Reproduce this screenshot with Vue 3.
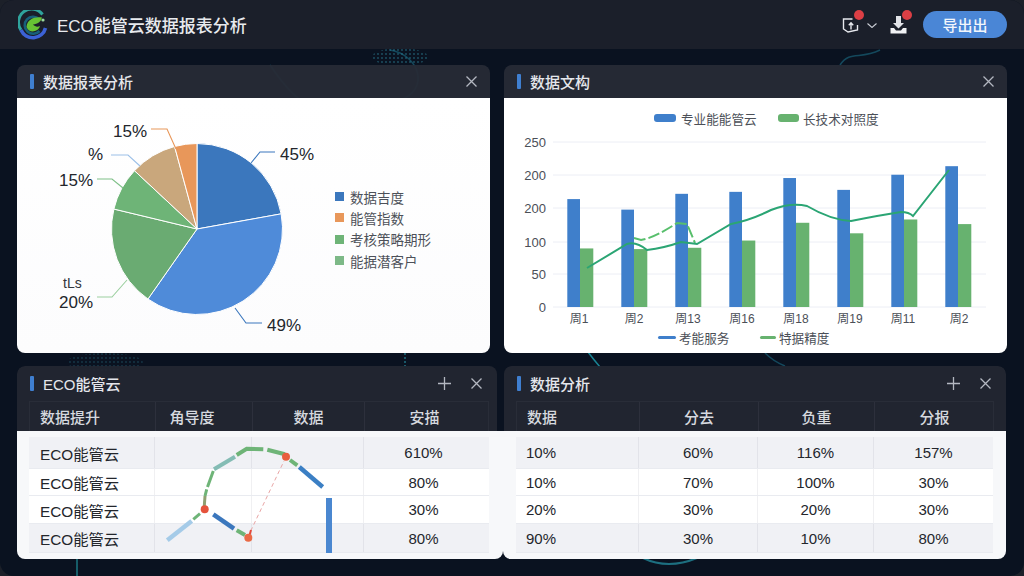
<script setup>
const pieCx = 180
const pieCy = 131
const pieR = 85.5

const slices = [
  { from: 0, to: 79.8, color: '#3b77bd' },
  { from: 79.8, to: 215, color: '#4f8bd9' },
  { from: 215, to: 283.5, color: '#6aab72' },
  { from: 283.5, to: 313, color: '#6eb477' },
  { from: 313, to: 344.8, color: '#c9a77c' },
  { from: 344.8, to: 360, color: '#e8975a' },
]

function polar(deg) {
  const rad = (deg * Math.PI) / 180
  return [pieCx + pieR * Math.sin(rad), pieCy - pieR * Math.cos(rad)]
}

function slicePath(s) {
  const [x1, y1] = polar(s.from)
  const [x2, y2] = polar(s.to)
  const large = s.to - s.from > 180 ? 1 : 0
  return `M${pieCx} ${pieCy}L${x1} ${y1}A${pieR} ${pieR} 0 ${large} 1 ${x2} ${y2}Z`
}

const pieLabels = [
  { text: '45%', x: 263, y: 62, line: '234,65 243,54 258,54', color: '#3b77bd' },
  { text: '49%', x: 250, y: 233, line: '218,210 229,225 245,225', color: '#3b77bd' },
  { text: '15%', x: 96, y: 39, line: '159,51 150,31 134,31', color: '#e8975a' },
  { text: '%', x: 71, y: 62, line: '123,68 111,57 94,57', color: '#9cc0e8' },
  { text: '15%', x: 42, y: 88, line: '106,90 95,81 80,81', color: '#7fc088' },
  { text: '20%', x: 42, y: 210, line: '110,182 95,199 80,199', color: '#9bcf9f' },
]

const pieLegend = [
  { name: '数据吉度', color: '#3b77bd' },
  { name: '能管指数', color: '#e8975a' },
  { name: '考核策略期形', color: '#6eb477' },
  { name: '能据潜客户', color: '#7db987' },
]

const yTicks = [
  { label: '250', y: 44 },
  { label: '200', y: 77 },
  { label: '200', y: 110 },
  { label: '100', y: 144 },
  { label: '50', y: 176 },
  { label: '0', y: 209 },
]

const weeks = [
  { label: '周1', x: 75, blue: 164, green: 89 },
  { label: '周2', x: 130, blue: 148, green: 88 },
  { label: '周13', x: 184, blue: 172, green: 90 },
  { label: '周16', x: 238, blue: 175, green: 101 },
  { label: '周18', x: 292, blue: 196, green: 128 },
  { label: '周19', x: 346, blue: 178, green: 112 },
  { label: '周11', x: 399, blue: 201, green: 133 },
  { label: '周2', x: 455, blue: 214, green: 126 },
]

const barBase = 209
const barScale = 0.658
const barX = (i) => 63.3 + i * 54

const leftRows = ['610%', '80%', '30%', '80%']

const rightRows = [
  ['10%', '60%', '116%', '157%'],
  ['10%', '70%', '100%', '30%'],
  ['20%', '30%', '20%', '30%'],
  ['90%', '30%', '10%', '80%'],
]
</script>

<template>
  <div class="screen">
    <svg class="backdrop" width="1024" height="576" viewBox="0 0 1024 576" fill="none">
      <defs>
        <pattern id="dots" width="4" height="4" patternUnits="userSpaceOnUse">
          <circle cx="2" cy="2" r="0.9" fill="#2a7f95" />
        </pattern>
      </defs>
      <g stroke="#17566b" stroke-width="1.5" opacity="0.8">
        <path d="M270 65C300 110 330 130 400 100C430 90 420 55 390 50" />
        <path d="M880 50C860 60 850 50 840 65" />
        <path d="M765 353C770 358 775 362 785 366" />
      </g>
      <path d="M588 352Q594 360 600 367" stroke="#1a8494" stroke-width="1.5" />
      <path d="M643 558Q668 570 697 558" stroke="#1d6f80" stroke-width="2" />
      <path d="M77 559V576" stroke="#1f8f9a" stroke-width="1.2" />
      <path d="M405 353V366" stroke="#1f6f80" stroke-width="1.5" stroke-dasharray="2 2" />
      <ellipse cx="400" cy="57" rx="28" ry="9" fill="url(#dots)" opacity="0.6" />
      <ellipse cx="105" cy="362" rx="38" ry="9" fill="url(#dots)" opacity="0.35" />
    </svg>

    <header class="topbar">
      <div class="brand">
        <svg class="logo" width="30" height="30" viewBox="0 0 30 30" fill="none">
          <path d="M24.5 4.5A13 13 0 0 0 3 20" stroke="#2fa39c" stroke-width="3" />
          <path d="M3 20A13 13 0 0 0 27.5 18" stroke="#3c62d6" stroke-width="3.6" />
          <path d="M21 9A8.5 8.5 0 1 0 21.5 21" stroke="#17607a" stroke-width="2.6" />
          <path d="M8.5 17C9 9.5 16 6.5 24 7.5C23 12 19.5 14 15 14.5C17 16.5 19 17.5 22 16C20.5 22 11 24 8.5 17Z" fill="#67c234" />
          <circle cx="25" cy="10" r="1.6" fill="#9bd8a0" />
        </svg>
        <h1 class="app-title">ECO能管云数据报表分析</h1>
      </div>
      <div class="actions">
        <span class="icon-wrap icon-wrap--first">
          <svg width="17" height="17" viewBox="0 0 17 17" fill="none" stroke="#e7e9ee" stroke-width="1.4">
            <path d="M10.5 3H1.5V13L6 16L15.5 14V9" />
            <path d="M9 13.5V7M6.8 9.2L9 6.8L11.2 9.2" />
          </svg>
          <i class="badge"></i>
        </span>
        <svg class="chevron" width="10" height="5" viewBox="0 0 10 5" fill="none" stroke="#c9ccd4" stroke-width="1.1">
          <path d="M0.5 0.5L5 4.5L9.5 0.5" />
        </svg>
        <span class="icon-wrap icon-wrap--second">
          <svg width="17" height="18" viewBox="0 0 17 18">
            <path d="M6 0H11V7H14L8.5 12.5L3 7H6Z" fill="#e2e4e8" />
            <path d="M0.5 12H4L6 14.5H11L13 12H16.5V17.5H0.5Z" fill="#f1f2f4" />
          </svg>
          <i class="badge"></i>
        </span>
        <button class="export-btn">导出出</button>
      </div>
    </header>

    <main class="content">
      <div class="row row--top">
        <section class="panel panel--pie">
          <div class="panel-head">
            <span class="panel-mark"></span>
            <span class="panel-title">数据报表分析</span>
            <svg class="head-icon" width="11" height="11" viewBox="0 0 11 11"><path d="M0.5 0.5L10.5 10.5M10.5 0.5L0.5 10.5" /></svg>
          </div>
          <div class="panel-body pie-body">
            <svg class="pie" width="310" height="255" viewBox="0 0 310 255">
              <path
                v-for="s in slices"
                :key="s.from"
                :d="slicePath(s)"
                :fill="s.color"
                stroke="#fff"
                stroke-width="1"
              />
              <g v-for="l in pieLabels" :key="l.line">
                <polyline :points="l.line" fill="none" :stroke="l.color" stroke-width="1.1" />
                <text :x="l.x" :y="l.y" class="pie-label">{{ l.text }}</text>
              </g>
              <text x="46" y="190" class="pie-note">tLs</text>
            </svg>
            <ul class="pie-legend">
              <li v-for="item in pieLegend" :key="item.name">
                <i :style="{ background: item.color }"></i>{{ item.name }}
              </li>
            </ul>
          </div>
        </section>

        <section class="panel panel--bars">
          <div class="panel-head">
            <span class="panel-mark"></span>
            <span class="panel-title">数据文构</span>
            <svg class="head-icon" width="11" height="11" viewBox="0 0 11 11"><path d="M0.5 0.5L10.5 10.5M10.5 0.5L0.5 10.5" /></svg>
          </div>
          <div class="panel-body">
            <svg class="bars" width="502" height="255" viewBox="0 0 502 255">
              <rect x="150" y="16" width="22" height="8" rx="3" fill="#3f7fcb" />
              <text x="177" y="26" class="legend-text">专业能能管云</text>
              <rect x="274" y="16" width="21" height="8" rx="3" fill="#67b26f" />
              <text x="299" y="26" class="legend-text">长技术对照度</text>

              <g v-for="t in yTicks" :key="t.y">
                <line x1="49" x2="482" :y1="t.y" :y2="t.y" stroke="#eceef5" />
                <text x="42" :y="t.y + 5" text-anchor="end" class="axis-text">{{ t.label }}</text>
              </g>

              <g v-for="(w, i) in weeks" :key="i">
                <rect :x="barX(i)" :y="barBase - w.blue * barScale" width="12.7" :height="w.blue * barScale" fill="#3f7fcb" />
                <rect :x="barX(i) + 12.7" :y="barBase - w.green * barScale" width="13.3" :height="w.green * barScale" fill="#67b26f" />
                <text :x="w.x" y="225" text-anchor="middle" class="week-text">{{ w.label }}</text>
              </g>

              <path
                d="M130 140L137 142Q150 140 173 125L183 126L191 145"
                fill="none"
                stroke="#58bf6c"
                stroke-width="2"
                stroke-dasharray="12 3"
              />
              <path
                d="M83 170L123 146Q132 143 143 152Q160 150 177 144L193 146L227 126Q247 122 267 112Q287 104 303 108Q327 122 347 123Q377 117 397 114Q405 114 409 118L445 72"
                fill="none"
                stroke="#2ba574"
                stroke-width="2"
              />

              <rect x="154" y="238" width="18" height="3" rx="1.5" fill="#3f7fcb" />
              <text x="175" y="245" class="legend-text">考能服务</text>
              <rect x="256" y="238" width="16" height="3" rx="1.5" fill="#67b26f" />
              <text x="275" y="245" class="legend-text">特据精度</text>
            </svg>
          </div>
        </section>
      </div>

      <div class="row row--bottom">
        <section class="panel panel--table-left">
          <div class="table-top">
            <div class="panel-head panel-head--tall">
              <span class="panel-mark"></span>
              <span class="panel-title">ECO能管云</span>
              <svg class="head-icon head-icon--plus" width="13" height="13" viewBox="0 0 13 13"><path d="M6.5 0V13M0 6.5H13" /></svg>
              <svg class="head-icon" width="11" height="11" viewBox="0 0 11 11"><path d="M0.5 0.5L10.5 10.5M10.5 0.5L0.5 10.5" /></svg>
            </div>
            <div class="tbl-head cols-left">
              <span class="cell cell--first">数据提升</span>
              <span class="cell">角导度</span>
              <span class="cell">数据</span>
              <span class="cell">安描</span>
            </div>
          </div>
          <div class="panel-body table-body">
            <div v-for="(val, i) in leftRows" :key="i" class="tbl-row cols-left">
              <span class="cell cell--first">ECO能管云</span>
              <span class="cell"></span>
              <span class="cell"></span>
              <span class="cell">{{ val }}</span>
            </div>
            <svg class="trend" width="160" height="120" viewBox="0 0 160 120" fill="none">
              <path d="M2.3 103.3L26.7 84" stroke="#a5cbe8" stroke-width="4.5" />
              <path d="M28.3 82.3L35 76.7" stroke="#6eb477" stroke-width="3" />
              <path d="M39.3 69L40 59" stroke="#8f9f70" stroke-width="3" />
              <path d="M40 59L41.7 52.3M42.5 50L48.3 34" stroke="#6eb477" stroke-width="3" />
              <path d="M49 32.3L70 19.7" stroke="#84bcb4" stroke-width="4" />
              <path d="M71.7 18L81.7 11.7L98.3 12.3" stroke="#6eb477" stroke-width="4" />
              <path d="M102.3 12.7L120 17.3" stroke="#6eb477" stroke-width="4" />
              <path d="M125 23L132.3 28.3" stroke="#6eb477" stroke-width="4" />
              <path d="M134.3 30L157.7 50" stroke="#3b7fc4" stroke-width="4.5" />
              <path d="M48.3 77.3L69 91.7" stroke="#3b77bd" stroke-width="4.5" />
              <path d="M71.7 93.3L80 98" stroke="#6eb477" stroke-width="4" />
              <path d="M85.7 94L119 24" stroke="#e8a5a5" stroke-width="1" stroke-dasharray="4 3" />
              <path d="M84 100L86 93" stroke="#e5483a" stroke-width="2" />
              <circle cx="39.7" cy="72.3" r="4" fill="#e5533c" />
              <circle cx="83.3" cy="100.7" r="4" fill="#ea6a45" />
              <circle cx="121" cy="19.7" r="4" fill="#e85f3f" />
            </svg>
            <span class="side-bar"></span>
          </div>
        </section>

        <section class="panel panel--table-right">
          <div class="table-top">
            <div class="panel-head panel-head--tall">
              <span class="panel-mark"></span>
              <span class="panel-title">数据分析</span>
              <svg class="head-icon head-icon--plus" width="13" height="13" viewBox="0 0 13 13"><path d="M6.5 0V13M0 6.5H13" /></svg>
              <svg class="head-icon" width="11" height="11" viewBox="0 0 11 11"><path d="M0.5 0.5L10.5 10.5M10.5 0.5L0.5 10.5" /></svg>
            </div>
            <div class="tbl-head cols-right">
              <span class="cell cell--first">数据</span>
              <span class="cell">分去</span>
              <span class="cell">负重</span>
              <span class="cell">分报</span>
            </div>
          </div>
          <div class="panel-body table-body">
            <div v-for="(row, i) in rightRows" :key="i" class="tbl-row cols-right">
              <span v-for="(val, j) in row" :key="j" class="cell" :class="{ 'cell--first': j === 0 }">{{ val }}</span>
            </div>
          </div>
        </section>
      </div>
    </main>
  </div>
</template>

<style>
html,
body {
  margin: 0;
  background: #1c2029;
}
</style>

<style scoped>
.screen {
  position: relative;
  width: 1024px;
  height: 576px;
  overflow: hidden;
  border-radius: 14px;
  background: #0a1220;
  font-family: "Liberation Sans", "Noto Sans CJK SC", sans-serif;
  color: #20242c;
}

.backdrop {
  position: absolute;
  inset: 0;
}

.topbar {
  position: relative;
  height: 49px;
  box-sizing: border-box;
  display: flex;
  align-items: center;
  justify-content: space-between;
  padding: 0 17px 0 18px;
  background: #1b1f2a;
}

.brand {
  display: flex;
  align-items: center;
  gap: 9px;
}

.app-title {
  margin: 0;
  font-size: 17px;
  font-weight: 500;
  color: #e8eaee;
}

.actions {
  display: flex;
  align-items: center;
}

.icon-wrap {
  position: relative;
  display: flex;
}

.badge {
  position: absolute;
  top: -6px;
  right: -5px;
  width: 10px;
  height: 10px;
  border-radius: 50%;
  background: #dc3f45;
}

.chevron {
  margin: 1px 13px 0 8px;
}

.export-btn {
  width: 84px;
  height: 27px;
  margin-left: 16px;
  padding: 0;
  border: 0;
  border-radius: 14px;
  background: #4a86d6;
  color: #f2f6fc;
  font: 500 15px "Liberation Sans", "Noto Sans CJK SC", sans-serif;
}

.content {
  position: relative;
  display: flex;
  flex-direction: column;
  gap: 13px;
  padding: 16px 17px 0;
}

.row {
  display: flex;
}

.row--top {
  height: 288px;
  gap: 14px;
}

.row--bottom {
  height: 193px;
}

.panel {
  display: flex;
  flex-direction: column;
  border-radius: 8px;
  overflow: hidden;
}

.panel--pie {
  width: 473px;
}

.panel--bars {
  width: 503px;
}

.panel--table-left {
  width: 486px;
}

.panel--table-right {
  width: 503px;
}

.panel-head {
  flex: none;
  height: 33px;
  display: flex;
  align-items: center;
  padding: 0 13px;
  background: rgba(39, 43, 54, 0.95);
  color: #e5e7ec;
}

.panel-head--tall {
  height: 35px;
  background: none;
  padding-right: 15px;
}

.table-top {
  flex: none;
  background: rgba(35, 39, 50, 0.93);
  border-radius: 8px 8px 0 0;
}

.panel--table-left .table-top {
  margin-right: 6px;
}

.panel--table-right .table-top {
  margin-left: 1px;
}

.panel-mark {
  width: 4px;
  height: 15px;
  margin-right: 9px;
  border-radius: 1px;
  background: #3f7fd0;
}

.panel-title {
  flex: 1;
  font-size: 15px;
  font-weight: 500;
}

.head-icon {
  flex: none;
  fill: none;
  stroke: #b4b8c1;
  stroke-width: 1.3;
}

.head-icon--plus {
  margin-right: 20px;
}

.panel-body {
  flex: 1;
  background: #fff;
  position: relative;
}

.pie-body {
  display: flex;
  background: linear-gradient(180deg, #fff, #fcfcfd);
}

.pie {
  flex: none;
}

.pie-label {
  font-size: 17px;
  fill: #23262c;
}

.pie-note {
  font-size: 14px;
  fill: #33363c;
}

.pie-legend {
  list-style: none;
  margin: 88px 0 0 8px;
  padding: 0;
  font-size: 13.5px;
  color: #4d5159;
}

.pie-legend li {
  display: flex;
  align-items: center;
  height: 21.3px;
}

.pie-legend i {
  width: 9px;
  height: 9px;
  margin-right: 6px;
}

.bars {
  display: block;
}

.legend-text,
.week-text {
  fill: #4b4f57;
}

.legend-text {
  font-size: 12.6px;
}

.week-text {
  font-size: 12px;
}

.axis-text {
  font-size: 13px;
  fill: #4b4f57;
}

.tbl-head,
.tbl-row {
  display: grid;
  font-size: 15px;
}

.tbl-row.cols-left .cell--first {
  padding-left: 11px;
  font-size: 15.3px;
}

.cols-left {
  grid-template-columns: 125px 97px 112px 126px;
}

.cols-left .cell:nth-child(2) {
  padding-right: 24px;
}

.cols-left .cell:nth-child(4) {
  padding-right: 6px;
}

.cols-right {
  grid-template-columns: 122px 119px 116px 120px;
}

.tbl-head {
  height: 30px;
  margin: 0 8px 0 12px;
  box-sizing: border-box;
  border: 1px solid rgba(255, 255, 255, 0.04);
  border-bottom: 0;
  color: #d6d9df;
  font-weight: 500;
}

.panel--table-right .tbl-head {
  margin: 0 12px 0 12px;
}

.cell {
  display: flex;
  align-items: center;
  justify-content: center;
  border-left: 1px solid rgba(128, 135, 150, 0.12);
}

.cell--first {
  justify-content: flex-start;
  padding-left: 10px;
  border-left: 0;
}

.table-body {
  box-sizing: border-box;
  padding: 6px 14px 7px 12px;
  background: #f7f8fa;
}

.panel--table-right .table-body {
  padding: 6px 13px 7px 13px;
}

.tbl-row {
  border-bottom: 1px solid #e9ebf0;
  color: #23262c;
  box-sizing: border-box;
}

.tbl-row:nth-of-type(1) {
  height: 32px;
  background: #f0f1f5;
}

.tbl-row:nth-of-type(2) {
  height: 27px;
  background: #fff;
}

.tbl-row:nth-of-type(3) {
  height: 28px;
  background: #fff;
}

.tbl-row:nth-of-type(4) {
  height: 29px;
  background: #f0f1f5;
}

.trend {
  position: absolute;
  left: 148px;
  top: 6px;
  overflow: visible;
}

.side-bar {
  position: absolute;
  left: 309px;
  top: 67px;
  width: 6px;
  height: 55px;
  background: #4a87d0;
}
</style>
